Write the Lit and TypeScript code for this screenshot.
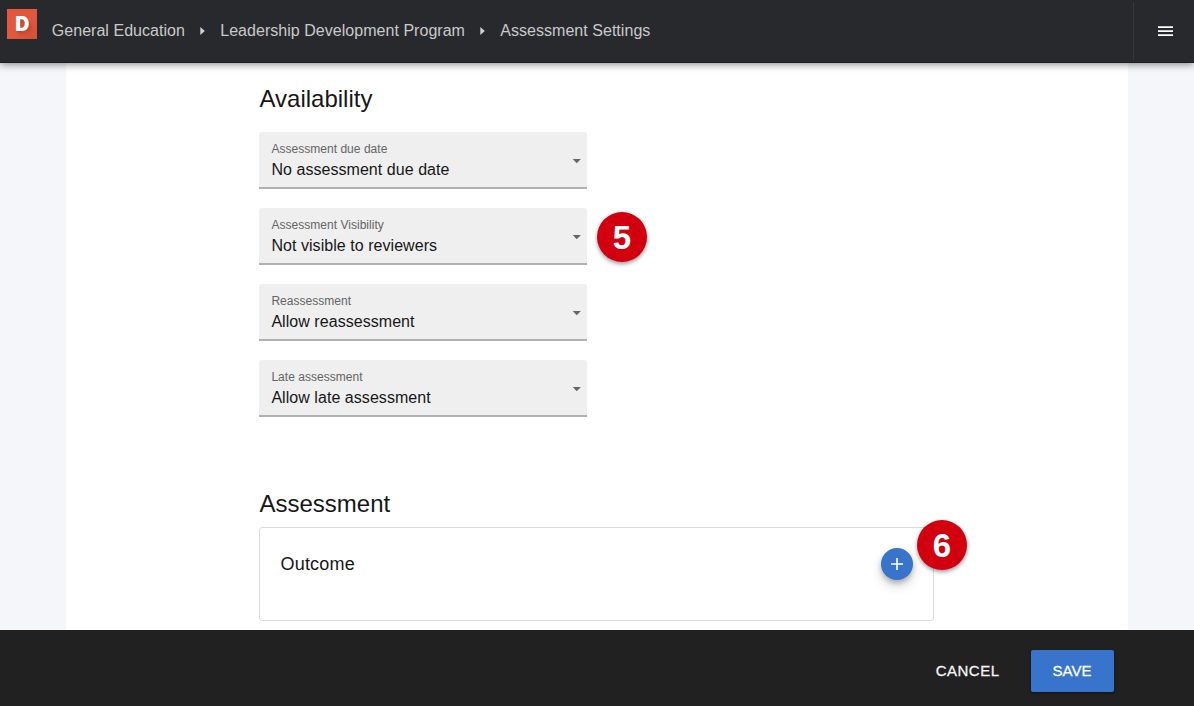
import { LitElement, html, css } from "lit";
import { customElement, property } from "lit/decorators.js";

@customElement("select-field")
class SelectField extends LitElement {
  @property() label = "";
  @property() value = "";

  static styles = css`
    :host {
      display: flex;
      align-items: stretch;
      box-sizing: border-box;
      width: 328px;
      height: 57px;
      background: #efefef;
      border-bottom: 2px solid #b1b1b1;
      border-radius: 3px 3px 0 0;
    }
    .text {
      flex: 1;
      padding: 10px 0 0 12.4px;
    }
    .label {
      font-size: 12px;
      line-height: 14px;
      letter-spacing: 0.03px;
      color: #646464;
    }
    .value {
      margin-top: 4px;
      font-size: 16px;
      line-height: 20px;
      letter-spacing: 0.05px;
      color: #171717;
    }
    .arrow {
      margin: 27px 6px 0 0;
      width: 9px;
      height: 5px;
      fill: #666;
    }
  `;

  render() {
    return html`
      <div class="text">
        <div class="label">${this.label}</div>
        <div class="value">${this.value}</div>
      </div>
      <svg class="arrow" viewBox="0 0 9 5"><path d="M0.7 0.1h8.2L4.8 4.3z" /></svg>
    `;
  }
}

@customElement("app-root")
class AppRoot extends LitElement {
  private fields = [
    { label: "Assessment due date", value: "No assessment due date" },
    { label: "Assessment Visibility", value: "Not visible to reviewers", step: "5" },
    { label: "Reassessment", value: "Allow reassessment" },
    { label: "Late assessment", value: "Allow late assessment" },
  ];

  static styles = css`
    :host {
      display: flex;
      flex-direction: column;
      height: 706px;
      overflow: hidden;
      background: #f5f6fa;
      font-family: "Liberation Sans", Arial, sans-serif;
      color: #171717;
    }
    .header {
      flex: none;
      box-sizing: border-box;
      height: 63px;
      display: flex;
      background: #28292d;
      border-bottom: 1px solid #1d1e20;
      box-shadow: 0 1px 8px rgba(0, 0, 0, 0.5);
      z-index: 1;
    }
    .logo {
      margin: 9px 0 0 7px;
      width: 30px;
      height: 30px;
      background: linear-gradient(135deg, #e2583e 55%, #d8513a 90%);
      color: #fff;
      font: 900 19.5px/30px Inter, sans-serif;
      text-align: center;
      text-indent: 0.5px;
      text-shadow: 1px 2px 2px #c24a33, 3px 4px 3px #c94d36;
    }
    .crumbs {
      display: flex;
      align-items: center;
      flex: 1;
      margin-left: 14.8px;
      font-size: 16px;
      letter-spacing: 0.035px;
      color: #c9c9ca;
    }
    .crumbs svg {
      width: 5px;
      height: 8px;
      margin: 0 15.3px 0 15px;
      fill: #d0d0d0;
    }
    .menu {
      width: 60px;
      margin: 2px 0;
      border-left: 1px solid #37383c;
      display: flex;
      align-items: center;
      justify-content: center;
    }
    .menu svg {
      width: 15px;
      height: 11px;
      margin: 0 0 0 3px;
    }
    .panel {
      flex: 1;
      min-height: 0;
      box-sizing: border-box;
      width: 1062.4px;
      margin-left: 66px;
      padding: 21px 193px 0;
      background: #fff;
    }
    h2 {
      margin: 0;
      padding-left: 0.5px;
      font-size: 24px;
      line-height: 30px;
      font-weight: 400;
    }
    .fields {
      display: flex;
      flex-direction: column;
      gap: 19px;
      margin: 18px 0 72px;
    }
    .field {
      position: relative;
      width: 328px;
    }
    .card {
      position: relative;
      box-sizing: border-box;
      width: 675.4px;
      height: 94px;
      margin-top: 8px;
      padding: 20px 20px 0 20.5px;
      display: flex;
      justify-content: space-between;
      align-items: flex-start;
      border: 1px solid #dcdcdc;
      border-radius: 3px;
    }
    .name {
      font-size: 18px;
      line-height: 33px;
      letter-spacing: 0.2px;
    }
    .add {
      width: 32px;
      height: 32px;
      padding: 0;
      border: 0;
      border-radius: 50%;
      background: #3874cb;
      box-shadow: 0 3px 5px rgba(0, 0, 0, 0.22), 0 6px 12px rgba(0, 0, 0, 0.16);
    }
    .add svg {
      display: block;
    }
    .badge {
      position: absolute;
      width: 50px;
      height: 50px;
      border-radius: 50%;
      background: #d2000f;
      color: #fff;
      font-size: 33px;
      font-weight: 700;
      line-height: 51px;
      text-align: center;
      box-shadow: 0 2px 4px rgba(0, 0, 0, 0.4);
    }
    .field .badge {
      left: 338px;
      top: 4px;
    }
    .card .badge {
      left: 657px;
      top: -8px;
    }
    .footer {
      flex: none;
      box-sizing: border-box;
      height: 76px;
      padding: 6px 80.5px 0 0;
      display: flex;
      align-items: center;
      justify-content: flex-end;
      gap: 31px;
      background: #212121;
      z-index: 1;
    }
    button {
      font: 15px "Liberation Sans", Arial, sans-serif;
      color: #fff;
      border: 0;
      -webkit-text-stroke: 0.3px currentColor;
    }
    .cancel {
      padding: 0 0 2px;
      background: none;
      letter-spacing: 0.5px;
      color: #f4f4f4;
    }
    .save {
      width: 83px;
      height: 42px;
      padding: 0 0 2px;
      background: #3874cb;
      border-radius: 2px;
      box-shadow: 0 1px 3px rgba(0, 0, 0, 0.5);
    }
  `;

  private separator() {
    return html`<svg viewBox="0 0 5 8"><path d="M0.3 0L4.8 4L0.3 8z" /></svg>`;
  }

  render() {
    return html`
      <header class="header">
        <div class="logo">D</div>
        <nav class="crumbs">
          <span>General Education</span>${this.separator()}
          <span>Leadership Development Program</span>${this.separator()}
          <span>Assessment Settings</span>
        </nav>
        <div class="menu">
          <svg viewBox="0 0 15 11" fill="#fff">
            <path d="M0 0.3h15v1.7H0zM0 4.2h15v1.7H0zM0 8.3h15v1.7H0z" />
          </svg>
        </div>
      </header>
      <main class="panel">
        <h2>Availability</h2>
        <div class="fields">
          ${this.fields.map(
            (f) => html`<div class="field">
              <select-field .label=${f.label} .value=${f.value}></select-field>
              ${f.step ? html`<div class="badge">${f.step}</div>` : ""}
            </div>`
          )}
        </div>
        <h2>Assessment</h2>
        <section class="card">
          <div class="name">Outcome</div>
          <button class="add" aria-label="Add outcome">
            <svg width="32" height="32" viewBox="0 0 32 32" stroke="#fff" stroke-width="1.6">
              <path d="M16 10v12M10 16h12" />
            </svg>
          </button>
          <div class="badge">6</div>
        </section>
      </main>
      <footer class="footer">
        <button class="cancel">CANCEL</button>
        <button class="save">SAVE</button>
      </footer>
    `;
  }
}
